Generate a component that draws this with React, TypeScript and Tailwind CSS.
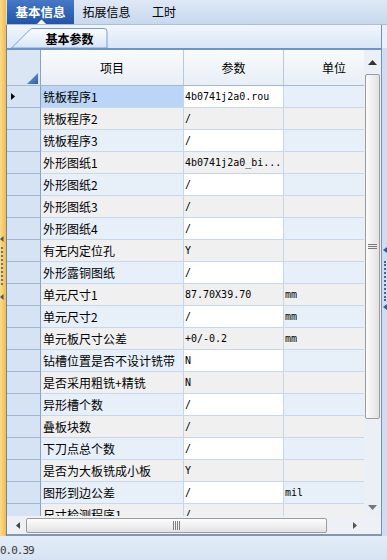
import React from "react";

const rows: [string, string, string][] = [
  ["铣板程序1", "4b0741j2a0.rou", ""],
  ["铣板程序2", "/", ""],
  ["铣板程序3", "/", ""],
  ["外形图纸1", "4b0741j2a0_bi...", ""],
  ["外形图纸2", "/", ""],
  ["外形图纸3", "/", ""],
  ["外形图纸4", "/", ""],
  ["有无内定位孔", "Y", ""],
  ["外形露铜图纸", "/", ""],
  ["单元尺寸1", "87.70X39.70", "mm"],
  ["单元尺寸2", "/", "mm"],
  ["单元板尺寸公差", "+0/-0.2", "mm"],
  ["钻槽位置是否不设计铣带", "N", ""],
  ["是否采用粗铣+精铣", "N", ""],
  ["异形槽个数", "/", ""],
  ["叠板块数", "/", ""],
  ["下刀点总个数", "/", ""],
  ["是否为大板铣成小板", "Y", ""],
  ["图形到边公差", "/", "mil"],
  ["尺寸检测程序1", "/", ""],
];

const mono = "font-['DejaVu_Sans_Mono',monospace] text-[10px]";

function Row({ i, label, value, unit }: { i: number; label: string; value: string; unit: string }) {
  const odd = i % 2 === 0;
  const selected = i === 0;
  return (
    <div className="flex h-[22px] shrink-0">
      <div className="w-[34px] shrink-0 bg-[#d6e3f4] border-r border-r-[#8aa1c2] border-b border-b-[#a3b7d2] flex items-center pl-[4px]">
        {selected && (
          <svg width="4" height="7" viewBox="0 0 4 7">
            <path d="M0 0 L4 3.5 L0 7Z" fill="#000" />
          </svg>
        )}
      </div>
      <div
        className={`w-[143px] shrink-0 border-r border-r-[#c5d6eb] border-b border-b-[#c8d8ec] flex items-center pl-[2px] whitespace-nowrap overflow-hidden ${
          selected ? "bg-[#bad5f5]" : odd ? "bg-[#e7eff9]" : "bg-[#f0f0f0]"
        }`}
      >
        {label}
      </div>
      <div
        className={`w-[100px] shrink-0 border-r border-r-[#c5d6eb] border-b border-b-[#c8d8ec] flex items-center pl-[1px] whitespace-nowrap overflow-hidden ${mono} ${
          odd ? "bg-white" : "bg-[#f0f0f0]"
        }`}
      >
        {value}
      </div>
      <div
        className={`w-[100px] shrink-0 border-b border-b-[#c8d8ec] flex items-center pl-[1px] whitespace-nowrap ${mono} ${
          odd ? "bg-[#e7eff9]" : "bg-[#f0f0f0]"
        }`}
      >
        {unit}
      </div>
    </div>
  );
}

export default function App() {
  return (
    <div className="w-[387px] h-[560px] flex flex-col overflow-hidden bg-[#dfe9f6] font-['Noto_Sans_CJK_SC',sans-serif] text-[12px] text-black leading-none">
      <div className="flex h-[536px] shrink-0">
        {/* left yellow splitter */}
        <div className="w-[6px] h-full shrink-0 bg-gradient-to-r from-[#fadc8c] to-[#f0bc52] flex flex-col items-start">
          <div className="h-[236px] shrink-0" />
          <svg width="4" height="6" viewBox="0 0 4 6">
            <path d="M0 3 L3.5 0 L3.5 6Z" fill="#4b5566" />
          </svg>
          <div className="mt-[5px] ml-[1px] h-[38px] border-l-2 border-dotted border-l-[#6b7585]" />
          <div className="h-[9px] shrink-0" />
          <svg width="4" height="6" viewBox="0 0 4 6">
            <path d="M0 3 L3.5 0 L3.5 6Z" fill="#4b5566" />
          </svg>
        </div>

        <div className="flex-1 flex flex-col">
          {/* top tab bar */}
          <div className="h-[25px] shrink-0 flex border-b border-b-[#aebfd7] bg-gradient-to-b from-[#dfe9f6] to-[#c8d8ed]">
            <div className="ml-[1px] w-[67px] h-[24px] relative flex items-center justify-center bg-gradient-to-b from-[#4678c6] to-[#2355a6] text-white font-bold text-[12.5px]">
              基本信息
              <svg className="absolute bottom-0 left-[30px]" width="9" height="5" viewBox="0 0 9 5">
                <path d="M0 5 L4.5 0.5 L9 5Z" fill="#ffffff" />
              </svg>
            </div>
            <div className="w-[65px] flex items-center justify-center">拓展信息</div>
            <div className="w-[50px] flex items-center justify-center">工时</div>
          </div>

          <div className="flex-1 flex">
            {/* main panel */}
            <div className="w-[376px] shrink-0 flex flex-col border-l border-l-[#72849f] border-r border-r-[#7890b3]">
              {/* sub tab area */}
              <div className="h-[23px] shrink-0 flex items-end bg-gradient-to-b from-[#f1f6fd] to-[#d9e6f6]">
                <div className="ml-[4px] w-[97px] h-[20px] relative flex items-center justify-center pl-[20px] pt-[1px] font-bold">
                  <svg className="absolute inset-0" width="97" height="20" viewBox="0 0 97 20">
                    <defs>
                      <linearGradient id="tabg" x1="0" y1="0" x2="0" y2="1">
                        <stop offset="0" stopColor="#fbfdff" />
                        <stop offset="1" stopColor="#d8e5f6" />
                      </linearGradient>
                    </defs>
                    <path
                      d="M0.5 20 L18.5 2 Q20 0.5 22 0.5 L93 0.5 Q96 0.5 96 3.5 L96 20 Z"
                      fill="url(#tabg)"
                      stroke="#7c9dcc"
                    />
                  </svg>
                  <span className="relative">基本参数</span>
                </div>
              </div>
              <div className="h-[2px] shrink-0 bg-[#6f93c9]" />

              {/* grid */}
              <div className="h-[484px] shrink-0 flex">
                <div className="w-[357px] shrink-0 flex flex-col overflow-hidden">
                  {/* header */}
                  <div className="h-[36px] shrink-0 flex border-b border-b-[#a6b9d3] bg-gradient-to-b from-[#f9fbfd] to-[#e8eef7]">
                    <div className="w-[34px] shrink-0 border-r border-r-[#8aa1c2] bg-[#dbe6f5] flex items-end justify-end pr-[2px] pb-[1px]">
                      <svg width="11" height="11" viewBox="0 0 11 11">
                        <defs>
                          <linearGradient id="cornerg" x1="0" y1="0" x2="1" y2="1">
                            <stop offset="0" stopColor="#7ea3d8" />
                            <stop offset="1" stopColor="#2f5ea8" />
                          </linearGradient>
                        </defs>
                        <path d="M11 0 L11 11 L0 11Z" fill="url(#cornerg)" />
                      </svg>
                    </div>
                    <div className="w-[143px] shrink-0 border-r border-r-[#b9c9dd] flex items-center justify-center">项目</div>
                    <div className="w-[100px] shrink-0 border-r border-r-[#b9c9dd] flex items-center justify-center">参数</div>
                    <div className="w-[100px] shrink-0 flex items-center justify-center">单位</div>
                  </div>
                  {/* body */}
                  <div className="flex-1 flex flex-col overflow-hidden bg-white">
                    {rows.map((r, i) => (
                      <Row key={i} i={i} label={r[0]} value={r[1]} unit={r[2]} />
                    ))}
                  </div>
                  {/* horizontal scrollbar */}
                  <div className="h-[18px] shrink-0 flex bg-[#edf1f6]">
                    <div className="w-[19px] shrink-0 flex items-center pl-[9px]">
                      <svg width="4" height="7" viewBox="0 0 4 7">
                        <path d="M4 0 L0 3.5 L4 7Z" fill="#444" />
                      </svg>
                    </div>
                    <div className="w-[301px] h-[15px] shrink-0 self-center rounded-[2px] border border-[#9c9c9c] bg-gradient-to-b from-[#fdfdfd] to-[#e3e3e3] flex items-center justify-center gap-[1px]">
                      <div className="w-[1px] h-[9px] bg-[#808080]" />
                      <div className="w-[1px] h-[9px] bg-[#808080]" />
                      <div className="w-[1px] h-[9px] bg-[#808080]" />
                      <div className="w-[1px] h-[9px] bg-[#808080]" />
                    </div>
                    <div className="flex-1" />
                    <div className="w-[18px] shrink-0 flex items-center justify-center">
                      <svg width="4" height="7" viewBox="0 0 4 7">
                        <path d="M0 0 L4 3.5 L0 7Z" fill="#555" />
                      </svg>
                    </div>
                  </div>
                </div>

                {/* vertical scrollbar */}
                <div className="w-[17px] shrink-0 flex flex-col bg-[#ebf0f6]">
                  <div className="h-[24px] shrink-0 flex items-center justify-center">
                    <svg width="9" height="5" viewBox="0 0 9 5">
                      <path d="M0 5 L4.5 0 L9 5Z" fill="#333" />
                    </svg>
                  </div>
                  <div className="ml-[1px] w-[15px] h-[345px] shrink-0 rounded-[2px] border border-[#9c9c9c] bg-gradient-to-r from-[#fbfbfb] to-[#e2e2e2] flex flex-col items-center justify-center gap-[1px]">
                    <div className="w-[9px] h-[1px] bg-[#7a7a7a]" />
                    <div className="w-[9px] h-[1px] bg-[#7a7a7a]" />
                    <div className="w-[9px] h-[1px] bg-[#7a7a7a]" />
                  </div>
                  <div className="flex-1" />
                  <div className="h-[18px] shrink-0 flex items-center justify-center">
                    <svg width="9" height="5" viewBox="0 0 9 5">
                      <path d="M0 0 L9 0 L4.5 5Z" fill="#777" />
                    </svg>
                  </div>
                  <div className="h-[18px] shrink-0 bg-[#edf1f6]" />
                </div>
              </div>
              <div className="h-[2px] shrink-0 bg-[#8196b5]" />
            </div>

            {/* right splitter */}
            <div className="flex-1 flex flex-col items-center bg-[#cfddf0]">
              <div className="h-[23px] w-full shrink-0 bg-[#e9f0fa]" />
              <div className="h-[199px] shrink-0" />
              <svg width="4" height="6" viewBox="0 0 4 6">
                <path d="M0 3 L4 0 L4 6Z" fill="#2f5b9f" />
              </svg>
              <div className="mt-[8px] h-[40px] border-l-2 border-dotted border-l-[#3a66ab]" />
              <div className="h-[3px] shrink-0" />
              <svg width="4" height="6" viewBox="0 0 4 6">
                <path d="M0 3 L4 0 L4 6Z" fill="#2f5b9f" />
              </svg>
            </div>
          </div>
        </div>
      </div>

      {/* status bar */}
      <div className="h-[24px] shrink-0 flex items-center pt-[4px] bg-gradient-to-b from-[#e4edf8] to-[#d6e3f3] font-['DejaVu_Sans_Mono',monospace] text-[11px] tracking-[-1px] text-[#3a3a3a]">
        0.0.39
      </div>
    </div>
  );
}
